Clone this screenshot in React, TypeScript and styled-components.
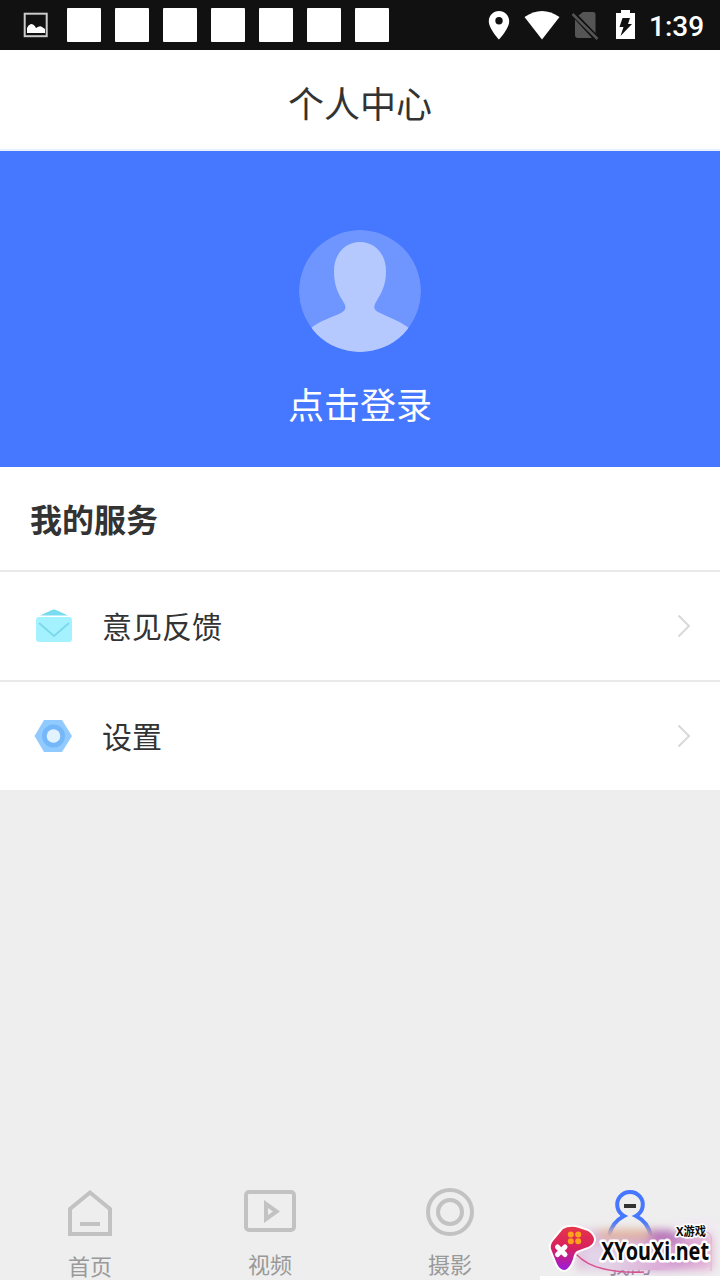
import React from "react";
import styled, { createGlobalStyle } from "styled-components";

const GlobalStyle = createGlobalStyle`
  * { box-sizing: border-box; }
  body {
    margin: 0;
    background: #eeeeee;
    font-family: "Noto Sans CJK SC", sans-serif;
    color: #333333;
  }
`;

const Screen = styled.div`
  position: relative;
  width: 720px;
  height: 1280px;
  display: flex;
  flex-direction: column;
  background: #eeeeee;
  overflow: hidden;
`;

const StatusBar = styled.header`
  height: 50px;
  flex: none;
  display: flex;
  align-items: center;
  justify-content: space-between;
  padding: 0 16px 0 23px;
  background: #111111;
`;

const StatusGroup = styled.div<{ $gap: number }>`
  display: flex;
  align-items: center;
  gap: ${(p) => p.$gap}px;
`;

const PictureIcon = styled.svg`
  margin-right: 5px;
`;

const Notice = styled.span`
  width: 34px;
  height: 34px;
  border-radius: 1px;
  background: #ffffff;
`;

const StatusIcons = styled.svg`
  display: block;
`;

const Clock = styled.span`
  font: 500 28px/50px Roboto, sans-serif;
  color: #ffffff;
  width: 55px;
  white-space: nowrap;
  padding-top: 3px;
`;

const TitleBar = styled.h1`
  margin: 0;
  height: 101px;
  flex: none;
  padding-top: 2px;
  border-bottom: 2px solid #e8f2fb;
  background: #ffffff;
  font-size: 36px;
  font-weight: 400;
  line-height: 101px;
  text-align: center;
`;

const Hero = styled.section`
  height: 316px;
  flex: none;
  display: flex;
  flex-direction: column;
  align-items: center;
  padding-top: 79px;
  background: #4678ff;
`;

const LoginText = styled.span`
  margin-top: 25px;
  font-size: 36px;
  line-height: 52px;
  color: #ffffff;
`;

const Services = styled.section`
  flex: none;
  background: #ffffff;
`;

const ServicesTitle = styled.h2`
  margin: 0;
  height: 103px;
  padding-left: 30px;
  font-size: 32px;
  font-weight: 700;
  line-height: 103px;
`;

const Row = styled.div`
  height: 110px;
  display: flex;
  align-items: center;
  padding: 0 28px 0 34px;
  border-top: 2px solid #e9e9e9;
`;

const RowLabel = styled.span`
  flex: 1;
  margin-left: 28px;
  padding-bottom: 2px;
  font-size: 30px;
  line-height: 106px;
`;

const Spacer = styled.div`
  flex: 1;
`;

const TabBar = styled.nav`
  height: 98px;
  flex: none;
  display: flex;
`;

const Tab = styled.div<{ $active?: boolean; $drop?: number }>`
  flex: 1;
  display: flex;
  flex-direction: column;
  align-items: center;
  color: ${(p) => (p.$active ? "#8c7a9c" : "#999999")};
  font-size: 22px;
  line-height: 26px;

  svg {
    flex: none;
    margin-bottom: ${(p) => 8 + (p.$drop ?? 0)}px;
  }
`;

const Watermark = styled.div`
  position: absolute;
  left: 530px;
  top: 1210px;
  width: 190px;
  height: 70px;
`;

const Chevron = () => (
  <svg width="16" height="26" viewBox="0 0 16 26" fill="none" stroke="#d9d9d9" strokeWidth="2">
    <path d="M2.500 2.500 13 13 2.500 23.500" />
  </svg>
);

export default function App() {
  return (
    <>
      <GlobalStyle />
      <Screen>
        <StatusBar>
          <StatusGroup $gap={14}>
            <PictureIcon width="25" height="26" viewBox="0 0 25 26">
              <rect x="1.700" y="1.700" width="22" height="22.500" fill="none" stroke="#c9ccc9" strokeWidth="2" />
              <path d="M4 21v-5q1-3 4-4 3 0 5 4 4-3 6-1l3 2v4Z" fill="#fff" />
            </PictureIcon>
            {[0, 1, 2, 3, 4, 5, 6].map((n) => (
              <Notice key={n} />
            ))}
          </StatusGroup>
          <StatusGroup $gap={14}>
            <StatusIcons width="150" height="50" viewBox="485 0 150 50">
              <path fillRule="evenodd" fill="#fff" d="M499 11c-5.700 0-10.200 4.400-10.200 10.200C488.800 28.500 499 39.500 499 39.500s10.200-11 10.200-18.300C509.200 15.400 504.700 11 499 11Zm0 6a3.700 3.700 0 1 1 0 7.400 3.700 3.700 0 0 1 0-7.400Z" />
              <path fill="#fff" d="M524.500 17Q542 5 559.500 17L542 39.500Z" />
              <path fill="#555" d="M583 12h10q2.500 0 2.500 2.500v18.500L578.500 15.500ZM575 19.500v15.500q0 3 3 3h14Z" />
              <path stroke="#555" strokeWidth="2.500" d="m572.500 14 25 25" />
              <path fill="#fff" d="M621 10h9v3h5v26h-19V13h5Z" />
              <path fill="#111" d="M622.500 18h7.500l-2 6h4l-11.500 12 3-9h-4Z" />
            </StatusIcons>
            <Clock>1:39</Clock>
          </StatusGroup>
        </StatusBar>
        <TitleBar>个人中心</TitleBar>
        <Hero>
          <svg width="122" height="122" viewBox="0 0 122 122">
            <defs>
              <clipPath id="avatar"><circle cx="61" cy="61" r="61" /></clipPath>
            </defs>
            <g clipPath="url(#avatar)">
              <circle cx="61" cy="61" r="61" fill="#6f96ff" />
              <path fill="#b5c9ff" d="M61 12c-15 0-26 12-26 29 0 15 4 22 10 32 3 5 1 8-3 10C32 88 22 90 12 98v24h98V98C99 90 89 87 79 82c-4-2-5-5-2-10 6-10 10-17 10-31 0-17-11-29-26-29Z" />
            </g>
          </svg>
          <LoginText>点击登录</LoginText>
        </Hero>
        <Services>
          <ServicesTitle>我的服务</ServicesTitle>
          <Row>
            <svg width="40" height="36" viewBox="0 0 40 36">
              <path fill="#76dcef" d="M6 7.500 18 2q2-1 4 0l12 5.500Z" />
              <rect x="2" y="9" width="36" height="25" rx="3" fill="#a4f2ff" />
              <path d="m5 15 15 13 15-13" fill="none" stroke="#7bd8ea" strokeWidth="1.800" />
            </svg>
            <RowLabel>意见反馈</RowLabel>
            <Chevron />
          </Row>
          <Row>
            <svg width="40" height="36" viewBox="0 0 40 36">
              <path fill="#91caff" d="M10 2h18l10 16-10 16H10L.500 18Z" />
              <circle cx="19.500" cy="18" r="11.500" fill="#75b8fa" />
              <circle cx="19.500" cy="18" r="6.800" fill="#e2f2ff" />
            </svg>
            <RowLabel>设置</RowLabel>
            <Chevron />
          </Row>
        </Services>
        <Spacer />
        <TabBar>
          <Tab $drop={2}>
            <svg width="60" height="60" viewBox="60 1182 60 60" fill="none" stroke="#c2c2c2" strokeWidth="4">
              <path d="M70 1234v-25l20-16.500 20 16.500v25ZM80 1224h20" />
            </svg>
            首页
          </Tab>
          <Tab>
            <svg width="60" height="60" viewBox="240 1182 60 60" fill="none" stroke="#c2c2c2" strokeWidth="4">
              <rect x="246" y="1192" width="48" height="38" rx="3" />
              <path d="M266 1204v15l10.500-7.500Z" />
            </svg>
            视频
          </Tab>
          <Tab>
            <svg width="60" height="60" viewBox="420 1182 60 60" fill="none" stroke="#c2c2c2" strokeWidth="4">
              <circle cx="450" cy="1212" r="22" />
              <circle cx="450" cy="1212" r="12" />
            </svg>
            摄影
          </Tab>
          <Tab $active>
            <svg width="60" height="60" viewBox="600 1182 60 60" fill="none" stroke="#4678ff" strokeWidth="4">
              <path d="M609 1236q3-14 15-20a12.800 12.800 0 1 1 12 0q12 6 15 20" />
              <path stroke="#333" d="M624 1206h12" />
            </svg>
            我的
          </Tab>
        </TabBar>
        <Watermark>
          <svg width="190" height="70" viewBox="530 1210 190 70">
            <defs>
              <linearGradient id="pad" x1="0" y1="0" x2="0" y2="1">
                <stop offset="0" stopColor="#e63749" />
                <stop offset=".5" stopColor="#d71f5f" />
                <stop offset="1" stopColor="#9c1ddd" />
              </linearGradient>
              <linearGradient id="haze" x1="0" y1="0" x2="1" y2="0">
                <stop offset="0" stopColor="#e0c3dc" />
                <stop offset=".35" stopColor="#d8aecd" />
                <stop offset=".65" stopColor="#cc90cd" />
                <stop offset="1" stopColor="#e8b8d8" />
              </linearGradient>
              <linearGradient id="cover" x1="0" y1="0" x2="1" y2="0">
                <stop offset="0" stopColor="#e3d3e6" stopOpacity="0" />
                <stop offset=".2" stopColor="#e3d3e6" />
                <stop offset=".75" stopColor="#dcaed8" />
                <stop offset="1" stopColor="#e2b5da" stopOpacity="0" />
              </linearGradient>
              <filter id="soft" x="-20%" y="-40%" width="140%" height="180%"><feGaussianBlur stdDeviation="4.500" /></filter>
            </defs>
            <g filter="url(#soft)">
              <rect x="577" y="1230" width="136" height="40" fill="url(#haze)" />
              <path d="M600 1229h55v10h-55Z" fill="#e0b5a0" />
              <path d="M650 1230h32v12h-32Z" fill="#b876b8" />
              <path d="M585 1246h60v22h-60Z" fill="#e2d4eb" />
              <path d="M675 1218h40v16h-40Z" fill="#f0eaf1" />
            </g>
            <path d="M590 1246h90v24h-90Z" fill="url(#cover)" />
            <path d="M540 1276h180v4H540Z" fill="#fff" />
            <path d="M576 1254q10 11 28 15t40 3" fill="none" stroke="#d8508f" strokeWidth="1.400" />
            <path d="M706 1232q7 1 5 12v27" fill="none" stroke="#d9b6d0" />
            <path fill="url(#pad)" stroke="#fff" strokeWidth="4" paintOrder="stroke" strokeLinejoin="round" d="M563 1229Q570 1225 579 1228L588 1231Q594 1235 594 1240 593 1246 585 1248L577 1251Q574 1253 573 1259 570 1268 565 1270 560 1270 557 1264L551 1249Q550 1245 553 1241Z" />
            <path stroke="#fff" strokeWidth="5" strokeLinecap="round" d="m557.500 1247 7.500 7.500m0-7.500-7.500 7.500" />
            <g fill="#ffa119">
              <circle cx="570.800" cy="1234.500" r="3" /><circle cx="578.200" cy="1234.500" r="3" />
              <circle cx="570.800" cy="1241.300" r="3" /><circle cx="578.200" cy="1241.300" r="3" />
            </g>
            <g fill="#0b0b0b" stroke="#fff" strokeWidth="5" paintOrder="stroke" strokeLinejoin="round" fontFamily='"Noto Sans", "Noto Sans CJK SC", sans-serif'>
              <text x="601" y="1260" fontSize="25" fontWeight="700" textLength="108" lengthAdjust="spacingAndGlyphs">XYouXi.net</text>
              <text x="676" y="1236" fontSize="12" fontWeight="700" strokeWidth="3" textLength="30" lengthAdjust="spacingAndGlyphs">X游戏</text>
            </g>
          </svg>
        </Watermark>
      </Screen>
    </>
  );
}
